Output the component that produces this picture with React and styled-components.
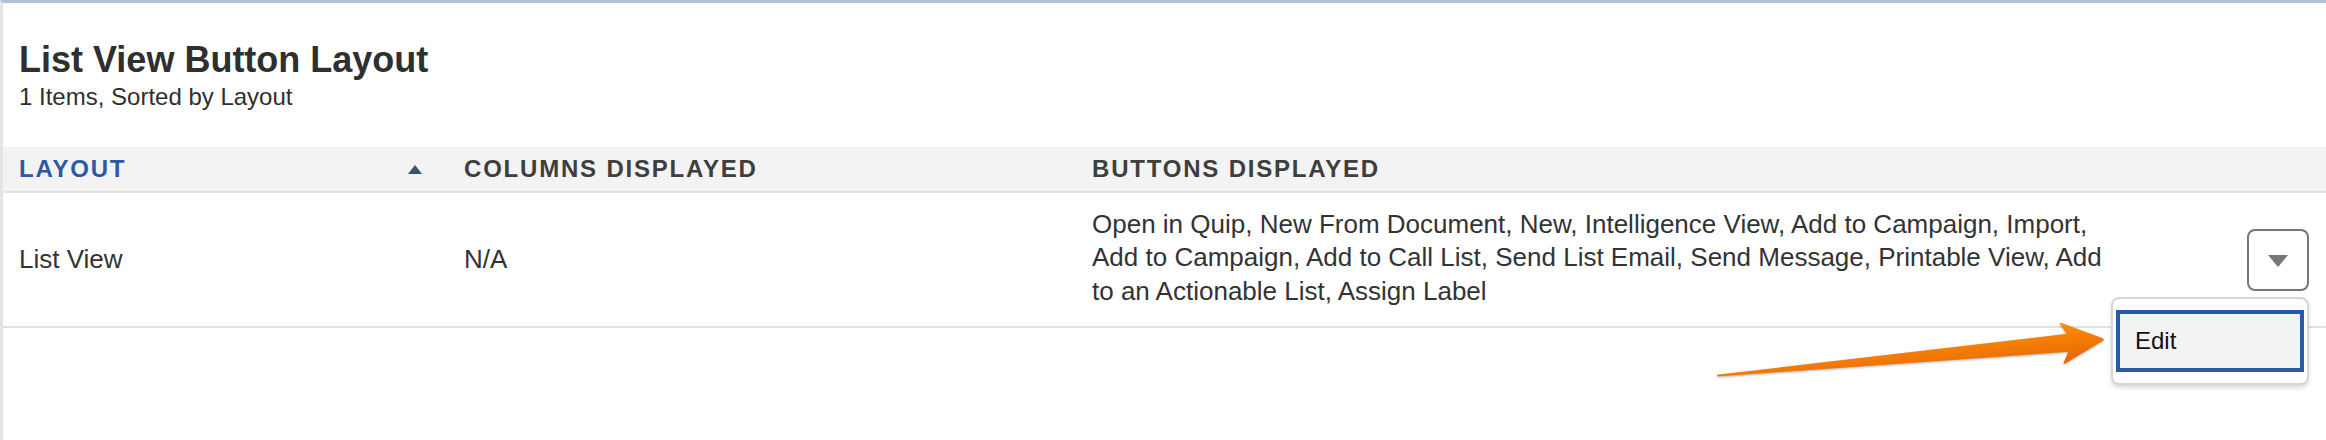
import React from 'react'
import styled, { createGlobalStyle } from 'styled-components'

const GlobalStyle = createGlobalStyle`
* { box-sizing: border-box; }
body {
margin: 0;
background: #ffffff;
font-family: 'Liberation Sans', Arial, Helvetica, sans-serif;
color: #333333;
}
`

const columns = [
    { id: 'layout', label: 'LAYOUT', sorted: true },
    { id: 'columns', label: 'COLUMNS DISPLAYED' },
    { id: 'buttons', label: 'BUTTONS DISPLAYED' },
]

const rows = [
    {
        id: 1,
        layout: 'List View',
        columns: 'N/A',
        buttons: 'Open in Quip, New From Document, New, Intelligence View, Add to Campaign, Import, Add to Campaign, Add to Call List, Send List Email, Send Message, Printable View, Add to an Actionable List, Assign Label',
    },
]

function App() {
    return (
        <>
            <GlobalStyle />
            <Page>
                <Heading>
                    <Title>List View Button Layout</Title>
                    <Subtitle>1 Items, Sorted by Layout</Subtitle>
                </Heading>

                <Table>
                    <HeadRow>
                        {columns.map((col) => (
                            <HeadCell key={col.id} $active={col.sorted}>
                                <span>{col.label}</span>
                                {col.sorted && <SortArrow />}
                            </HeadCell>
                        ))}
                        <HeadCell />
                    </HeadRow>

                    {rows.map((row) => (
                        <BodyRow key={row.id}>
                            <Cell>{row.layout}</Cell>
                            <Cell>{row.columns}</Cell>
                            <WrapCell>{row.buttons}</WrapCell>
                            <ActionCell>
                                <MenuAnchor>
                                    <MenuButton aria-label="Show actions">
                                        <Caret />
                                    </MenuButton>
                                    <Menu>
                                        <MenuItem>Edit</MenuItem>
                                    </Menu>
                                </MenuAnchor>
                            </ActionCell>
                        </BodyRow>
                    ))}
                </Table>

                {/* annotation arrow drawn over the screenshot */}
                <Arrow width="420" height="80" viewBox="0 0 420 80">
                    <defs>
                        <linearGradient id="arrowFill" x1="0" y1="0" x2="0" y2="1">
                            <stop offset="0" stopColor="#ff8d0a" />
                            <stop offset="1" stopColor="#e56500" />
                        </linearGradient>
                    </defs>
                    <g transform="translate(17 65.7) rotate(-5.36)">
                        <path
                            fill="url(#arrowFill)"
                            d="M0 -0.9 L352 -9 L347 -18.2 Q345 -21.8 348.6 -20.05 L387 -1.45 Q390 0 387 1.45 L348.6 20.05 Q345 21.8 347 18.2 L352 9 L0 0.9 Z"
                        />
                    </g>
                </Arrow>
            </Page>
        </>
    )
}

const Page = styled.div`
position: relative;
min-height: 440px;
border-top: 3px solid #b3c1d7;
border-left: 3px solid #e4e4e4;
`
const Heading = styled.div`
padding: 34px 16px 0 16px;
`
const Title = styled.h1`
margin: 0;
font-size: 36px;
font-weight: 700;
line-height: 45px;
color: #2f2f2f;
`
const Subtitle = styled.div`
font-size: 24px;
line-height: 30px;
color: #2f2f2f;
`
const Table = styled.div`
margin-top: 35px;
`
const grid = `
display: grid;
grid-template-columns: 445px 628px 1140px 1fr;
`
const HeadRow = styled.div`
${grid}
height: 46px;
background: #f3f3f3;
border-bottom: 2px solid #e1e1e1;
`
const HeadCell = styled.div`
display: flex;
align-items: center;
justify-content: space-between;
padding: 0 26px 0 16px;
font-size: 24px;
font-weight: 700;
letter-spacing: 1.8px;
color: ${(p) => (p.$active ? '#2a5aa6' : '#3e3e3c')};
`
const SortArrow = styled.span`
width: 0;
height: 0;
border-left: 7px solid transparent;
border-right: 7px solid transparent;
border-bottom: 9px solid #3d5272;
`
const BodyRow = styled.div`
${grid}
align-items: center;
border-bottom: 2px solid #e1e1e1;
`
const Cell = styled.div`
padding: 0 16px;
font-size: 26px;
line-height: 33.5px;
color: #333333;
`
const WrapCell = styled(Cell)`
padding: 14.5px 96px 18px 16px;
`
const ActionCell = styled.div`
display: flex;
justify-content: flex-end;
padding-right: 17px;
`
const MenuAnchor = styled.div`
position: relative;
`
const MenuButton = styled.button`
display: flex;
align-items: center;
justify-content: center;
width: 62px;
height: 62px;
padding: 0;
border: 2px solid #767676;
border-radius: 8px;
background: #ffffff;
`
const Caret = styled.span`
width: 0;
height: 0;
margin-top: 3px;
border-left: 10px solid transparent;
border-right: 10px solid transparent;
border-top: 12px solid #767676;
`
const Menu = styled.div`
position: absolute;
top: calc(100% + 6px);
right: 0;
width: 198px;
padding: 11px 3px;
background: #ffffff;
border: 2px solid #d6d6d6;
border-radius: 8px;
box-shadow: 0 3px 4px rgba(0, 0, 0, 0.14);
`
const MenuItem = styled.div`
height: 62px;
display: flex;
align-items: center;
padding-left: 15px;
background: #f3f3f3;
border: 4px solid #2a5aa6;
font-size: 24px;
line-height: 30px;
color: #111111;
`
const Arrow = styled.svg`
position: absolute;
left: 1697px;
top: 307px;
overflow: visible;
filter: drop-shadow(0 1px 1px rgba(0, 0, 0, 0.3));
`

export default App
